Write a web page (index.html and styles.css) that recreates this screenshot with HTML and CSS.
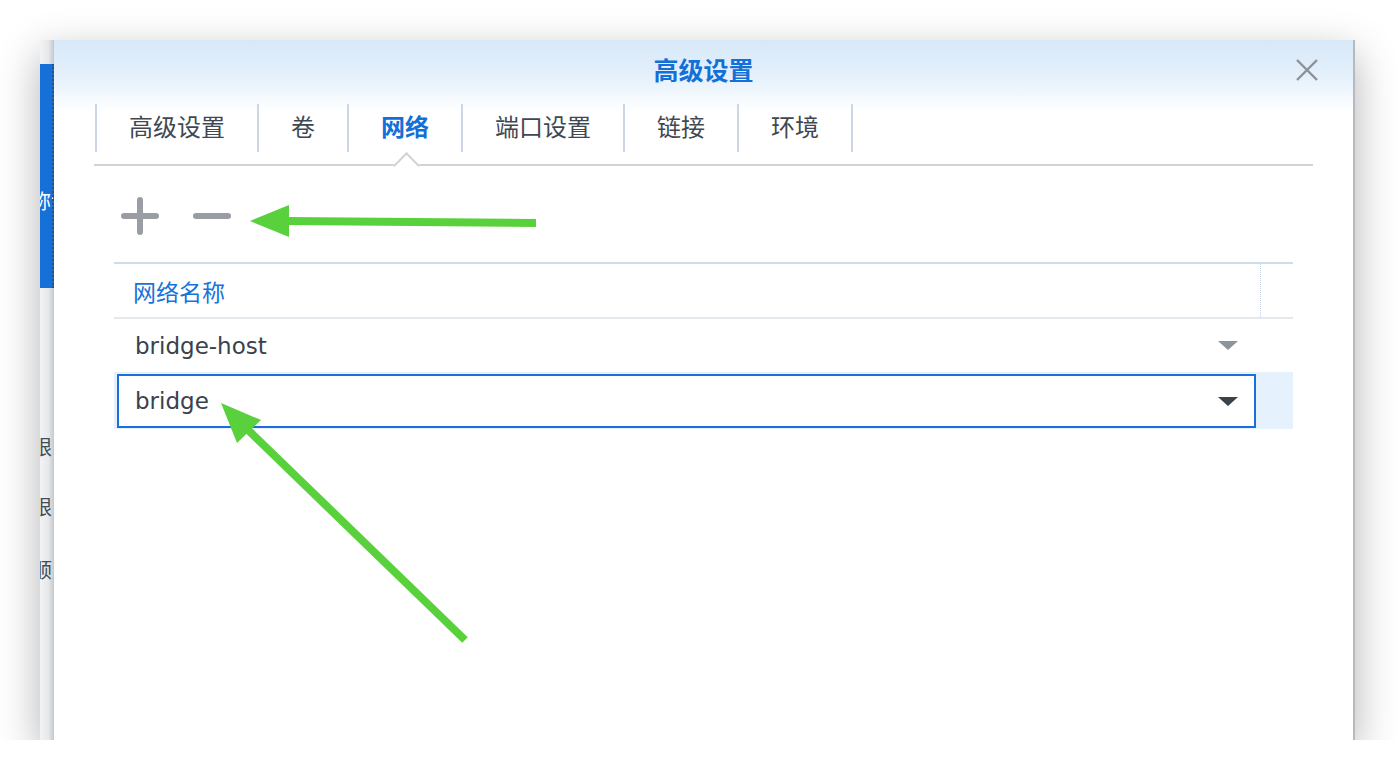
FILE: index.html
```html
<!DOCTYPE html>
<html>
<head>
    <title>高级设置</title>
    <link rel="stylesheet" href="styles.css">
</head>
<body>
    <div class="window">
        <!-- edge of the window lying behind the dialog -->
        <div class="behind">
            <div class="behind-top"></div>
            <div class="behind-blue">
                <div class="cut-text white"><span>称访</span></div>
            </div>
            <div class="behind-rest">
                <div class="cut-text first"><span>限</span></div>
                <div class="cut-text second"><span>限</span></div>
                <div class="cut-text third"><span>顺</span></div>
            </div>
        </div>

        <div class="dialog">
            <div class="titlebar">
                <span class="title">高级设置</span>
                <button class="close-btn">
                    <svg width="24" height="22" viewBox="0 0 24 22">
                        <path d="M2 1 L22 21 M22 1 L2 21" stroke="#8d9197" stroke-width="2.4" fill="none"/>
                    </svg>
                </button>
            </div>

            <div class="tabs-wrap">
                <div class="tabs">
                    <div class="tab">高级设置</div>
                    <div class="tab">卷</div>
                    <div class="tab active">网络</div>
                    <div class="tab">端口设置</div>
                    <div class="tab">链接</div>
                    <div class="tab last">环境</div>
                </div>
            </div>

            <div class="content">
                <div class="toolbar">
                    <button class="tool-btn">
                        <svg width="40" height="40" viewBox="0 0 40 40">
                            <path d="M4 20 H36 M20 4 V36" stroke="#9a9ea4" stroke-width="6" stroke-linecap="round" fill="none"/>
                        </svg>
                    </button>
                    <button class="tool-btn">
                        <svg width="40" height="40" viewBox="0 0 40 40">
                            <path d="M4 20 H36" stroke="#9a9ea4" stroke-width="6" stroke-linecap="round" fill="none"/>
                        </svg>
                    </button>
                </div>

                <div class="grid">
                    <div class="grid-head">
                        <div class="col-name">网络名称</div>
                        <div class="col-extra"></div>
                    </div>
                    <div class="grid-row">
                        <div class="col-name">
                            <span>bridge-host</span>
                            <span class="caret light"></span>
                        </div>
                        <div class="col-extra"></div>
                    </div>
                    <div class="grid-row selected">
                        <div class="col-name">
                            <div class="editor">
                                <span>bridge</span>
                                <span class="caret dark"></span>
                            </div>
                        </div>
                        <div class="col-extra"></div>
                    </div>
                </div>
            </div>
        </div>
    </div>

    <!-- green annotation arrows drawn over the screenshot -->
    <svg class="annotations" width="1396" height="780" viewBox="0 0 1396 780">
        <path d="M536 223 L286 221" stroke="#59d13c" stroke-width="8" fill="none"/>
        <polygon points="250,221 289,205 289,237" fill="#59d13c"/>
        <path d="M465 640 L246 428" stroke="#59d13c" stroke-width="8" fill="none"/>
        <polygon points="221,403 261,420 237,443" fill="#59d13c"/>
    </svg>
</body>
</html>
```

FILE: styles.css
```css
body {
    margin: 0;
    background-color: #ffffff;
    font-family: "DejaVu Sans", "Noto Sans CJK SC", sans-serif;
}
.window {
    display: flex;
    width: 1315px;
    height: 700px;
    margin: 40px 0 0 40px;
    box-shadow: 0 14px 40px rgba(0,0,0,0.3);
}
.behind {
    width: 14px;
    display: flex;
    flex-direction: column;
    background: linear-gradient(to right, #f2f3f4 0, #e6e8ea 60%, #c4c8cc 100%);
}
.behind-top {
    height: 24px;
}
.behind-blue {
    height: 224px;
    background-color: #1570d8;
    border-right: 2px dotted #2d4f78;
    box-sizing: border-box;
    padding-top: 126px;
}
.cut-text {
    width: 13px;
    height: 22px;
    overflow: hidden;
    white-space: nowrap;
    font-family: "Noto Sans CJK SC", sans-serif;
    font-size: 20px;
    line-height: 22px;
    color: #444c55;
}
.cut-text span {
    display: inline-block;
    margin-left: -8px;
}
.cut-text.white {
    color: #ffffff;
}
.cut-text.white span {
    margin-left: -9px;
}
.cut-text.first {
    margin-top: 148px;
}
.cut-text.second {
    margin-top: 38px;
}
.cut-text.third {
    margin-top: 41px;
}
.dialog {
    flex: 1;
    position: relative;
    background: linear-gradient(#d7e8f8 0, #e4f0fb 35px, #f7fbfe 62px, #ffffff 72px);
    border-right: 2px solid #b6babe;
}
.titlebar {
    position: relative;
    height: 64px;
    box-sizing: border-box;
    padding-top: 14px;
    text-align: center;
}
.title {
    font-family: "Noto Sans CJK SC", sans-serif;
    font-size: 25px;
    font-weight: bold;
    line-height: 30px;
    color: #1270d8;
}
.close-btn {
    position: absolute;
    top: 19px;
    right: 34px;
    padding: 0;
    border: none;
    background: none;
    line-height: 0;
}
.tabs-wrap {
    margin: 0 40px;
    padding-bottom: 12px;
    border-bottom: 2px solid #d1d4d7;
}
.tabs {
    display: flex;
    height: 48px;
    margin-left: 1px;
}
.tab {
    position: relative;
    padding: 0 32px;
    border-left: 2px solid #cbd7e4;
    font-family: "Noto Sans CJK SC", sans-serif;
    font-size: 24px;
    line-height: 44px;
    color: #3f4852;
}
.tab.last {
    border-right: 2px solid #cbd7e4;
}
.tab.active {
    color: #1270d8;
    font-weight: bold;
}
.tab.active::after {
    content: "";
    position: absolute;
    left: 48px;
    top: 52px;
    width: 17px;
    height: 17px;
    background-color: #ffffff;
    border-top: 2px solid #d1d4d7;
    border-left: 2px solid #d1d4d7;
    transform: rotate(45deg);
}
.content {
    padding: 24px 60px 0 60px;
}
.toolbar {
    display: flex;
    gap: 20px;
}
.tool-btn {
    width: 52px;
    height: 52px;
    padding: 0;
    border: none;
    background: none;
    display: flex;
    align-items: center;
    justify-content: center;
}
.grid {
    margin-top: 20px;
    border-top: 2px solid #cfdcea;
}
.grid-head {
    display: flex;
    height: 53px;
    border-bottom: 2px solid #e4e9ee;
}
.grid-head .col-name {
    padding-left: 19px;
    font-family: "Noto Sans CJK SC", sans-serif;
    font-size: 23px;
    line-height: 46px;
    color: #1673da;
}
.col-name {
    flex: 1;
    display: flex;
    align-items: center;
    justify-content: space-between;
}
.col-extra {
    width: 32px;
}
.grid-head .col-extra {
    border-left: 1px dotted #c3d4e6;
}
.grid-row {
    display: flex;
    height: 53px;
    font-size: 23px;
    color: #39424c;
}
.grid-row .col-name {
    padding: 0 23px 0 21px;
}
.grid-row.selected {
    height: 57px;
    background-color: #e5f1fc;
}
.grid-row.selected .col-name {
    padding: 2px 5px 1px 3px;
    align-items: stretch;
}
.editor {
    flex: 1;
    display: flex;
    align-items: center;
    justify-content: space-between;
    padding: 0 16px 0 16px;
    background-color: #ffffff;
    border: 2px solid #1a6fd9;
}
.caret {
    width: 0;
    height: 0;
    border-left: 10px solid transparent;
    border-right: 10px solid transparent;
    border-top: 9px solid #3b4249;
}
.caret.light {
    border-top-color: #8e949b;
}
.annotations {
    position: absolute;
    top: 0;
    left: 0;
    pointer-events: none;
}
```
